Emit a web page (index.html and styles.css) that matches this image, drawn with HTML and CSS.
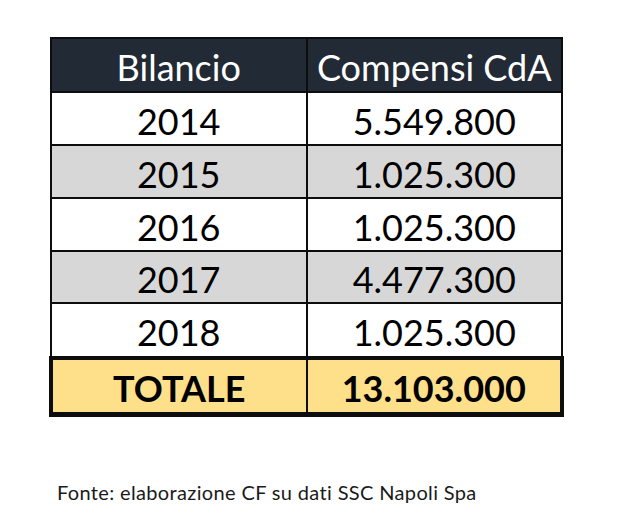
FILE: index.html
```html
<!DOCTYPE html>
<html lang="it">
<head>
<meta charset="utf-8">
<title>Compensi CdA</title>
<link rel="stylesheet" href="styles.css">
</head>
<body>
<main class="page">
  <table class="report">
    <thead>
      <tr class="head">
        <th>Bilancio</th>
        <th>Compensi CdA</th>
      </tr>
    </thead>
    <tbody>
      <tr class="row"><td>2014</td><td>5.549.800</td></tr>
      <tr class="row alt"><td>2015</td><td>1.025.300</td></tr>
      <tr class="row"><td>2016</td><td>1.025.300</td></tr>
      <tr class="row alt short"><td>2017</td><td>4.477.300</td></tr>
      <tr class="row last"><td>2018</td><td>1.025.300</td></tr>
      <tr class="total"><td>TOTALE</td><td>13.103.000</td></tr>
    </tbody>
  </table>
  <p class="source">Fonte: elaborazione CF su dati SSC Napoli Spa</p>
</main>
</body>
</html>
```

FILE: styles.css
```css
html, body {
  margin: 0;
  padding: 0;
  background: #ffffff;
}

.page {
  padding: 37px 0 0 49px;
  font-family: Lato, "Open Sans", sans-serif;
}

.report {
  border-collapse: collapse;
  width: 515px;
  table-layout: fixed;
}

.report th,
.report td {
  width: 50%;
  padding: 4px 0 0 0;
  border: 2px solid #0d0d0d;
  text-align: center;
  vertical-align: middle;
  font-size: 36px;
  line-height: 40px;
  color: #000;
  box-sizing: border-box;
}

.head th {
  background: #222a35;
  color: #ffffff;
  font-weight: 400;
  height: 54px;
}

.row td {
  background: #ffffff;
  height: 53px;
}

.row.alt td {
  background: #d7d7d7;
}

.row.short td {
  height: 52px;
}

.row.last td {
  height: 55px;
}

.total td {
  background: #fee08b;
  font-weight: 700;
  height: 56px;
  border-top-width: 4px;
  border-bottom-width: 5px;
}

.total td:first-child {
  border-left-width: 4px;
}

.total td:last-child {
  border-right-width: 4px;
}

.source {
  margin: 63px 0 0 8px;
  font-size: 20px;
  letter-spacing: 0.35px;
  line-height: 24px;
  color: #1a1a1a;
}
```
